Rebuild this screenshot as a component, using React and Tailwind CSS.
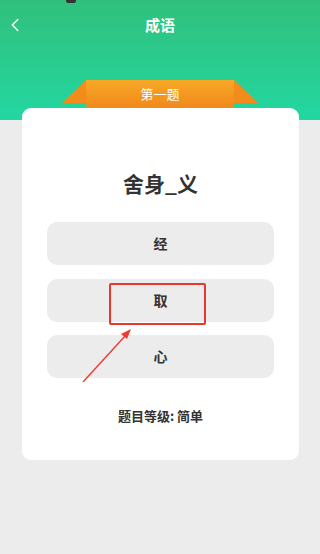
import { ChevronLeft } from "lucide-react"

const font = { fontFamily: '"Noto Sans CJK SC", "Noto Sans", sans-serif' }

function Option({ children, marked }) {
    return (
        <div className="relative h-[43px] rounded-[10px] bg-[#ececec] flex items-center justify-center text-[14px] font-bold text-[#333]">
            {children}
            {marked && (
                <div className="absolute left-[62px] top-[4px] w-[97px] h-[42px] border-2 border-[#e8372f] rounded-[2px]" />
            )}
        </div>
    )
}

export default function App() {
    return (
        <div className="w-[320px] h-[554px] bg-[#ececec] relative overflow-hidden" style={font}>
            <div className="h-[120px] bg-gradient-to-b from-[#30c07b] to-[#22d7a2]">
                <div className="h-[50px] flex items-center relative px-[4px]">
                    <ChevronLeft className="text-white w-[22px] h-[22px]" strokeWidth={1.6} />
                    <span className="absolute left-0 right-0 text-center text-white font-bold text-[15px]">成语</span>
                </div>
            </div>

            <div className="absolute left-[22px] right-[21px] top-[108px] h-[352px] bg-white rounded-[9px] flex flex-col">
                <div className="h-[86px] flex items-end justify-center">
                    <span className="text-[21px] font-bold text-[#333] leading-none">舍身_义</span>
                </div>
                <div className="mt-[28px] mx-[25px] flex flex-col gap-[13.5px]">
                    <Option>经</Option>
                    <Option marked>取</Option>
                    <Option>心</Option>
                </div>
                <div className="mt-[28px] text-center text-[13px] font-bold text-[#333]">题目等级: 简单</div>
            </div>

            {/* ribbon */}
            <svg className="absolute left-[62px] top-[80px]" width="196" height="24" viewBox="0 0 196 24">
                <polygon points="0,23 24,0 24,23" fill="#f38c1a" />
                <polygon points="172,0 196,23 172,23" fill="#f38c1a" />
            </svg>
            <div className="absolute left-[86px] top-[80px] w-[148px] h-[28px] rounded-b-[4px] bg-gradient-to-b from-[#f6a826] to-[#f1891b] flex items-center justify-center text-white text-[13px]">
                第一题
            </div>

            {/* arrow */}
            <svg className="absolute left-0 top-0" width="320" height="554" viewBox="0 0 320 554">
                <line x1="83" y1="382" x2="126" y2="335" stroke="#ef3b30" strokeWidth="1.4" />
                <polygon points="131,329 121,334 127,339" fill="#ef3b30" />
            </svg>

            <div className="absolute left-[66px] top-0 w-[10px] h-[3px] bg-[#333] rounded-b-[2px]" />
        </div>
    )
}
